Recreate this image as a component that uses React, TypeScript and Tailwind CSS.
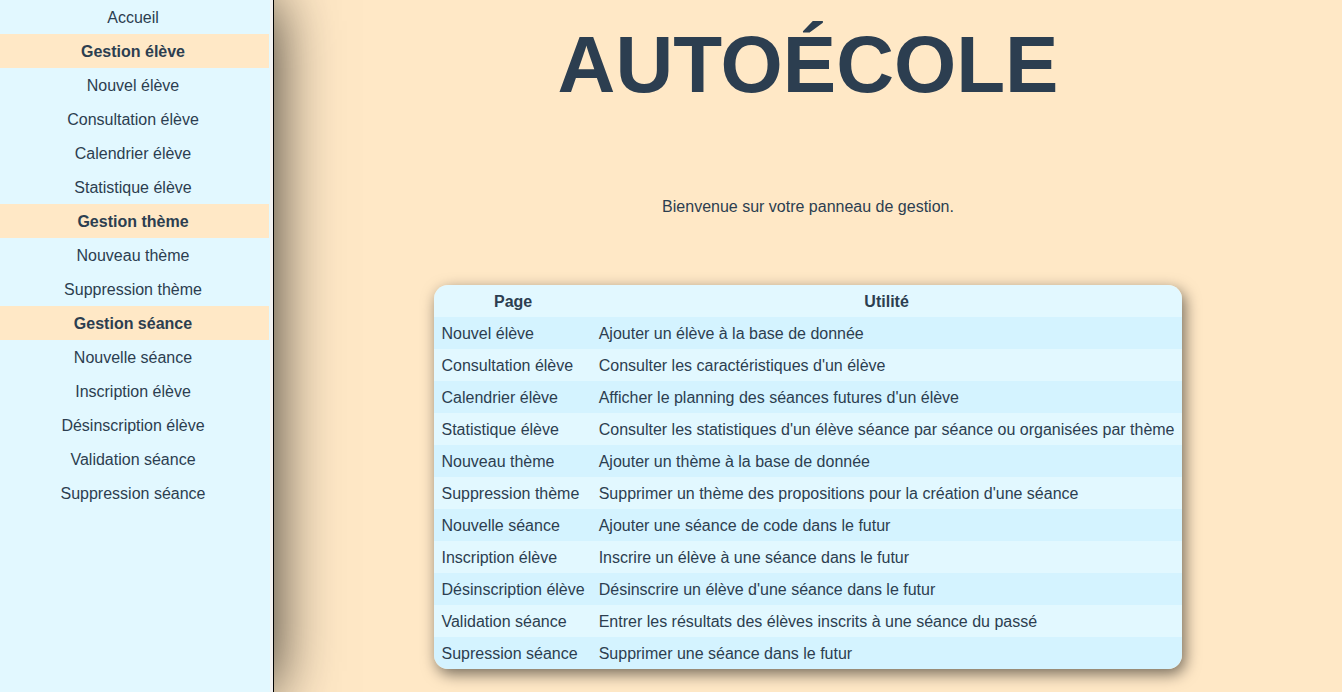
import React from "react";

const nav: { label: string; header?: boolean }[] = [
  { label: "Accueil" },
  { label: "Gestion élève", header: true },
  { label: "Nouvel élève" },
  { label: "Consultation élève" },
  { label: "Calendrier élève" },
  { label: "Statistique élève" },
  { label: "Gestion thème", header: true },
  { label: "Nouveau thème" },
  { label: "Suppression thème" },
  { label: "Gestion séance", header: true },
  { label: "Nouvelle séance" },
  { label: "Inscription élève" },
  { label: "Désinscription élève" },
  { label: "Validation séance" },
  { label: "Suppression séance" },
];

const rows: [string, string][] = [
  ["Nouvel élève", "Ajouter un élève à la base de donnée"],
  ["Consultation élève", "Consulter les caractéristiques d'un élève"],
  ["Calendrier élève", "Afficher le planning des séances futures d'un élève"],
  ["Statistique élève", "Consulter les statistiques d'un élève séance par séance ou organisées par thème"],
  ["Nouveau thème", "Ajouter un thème à la base de donnée"],
  ["Suppression thème", "Supprimer un thème des propositions pour la création d'une séance"],
  ["Nouvelle séance", "Ajouter une séance de code dans le futur"],
  ["Inscription élève", "Inscrire un élève à une séance dans le futur"],
  ["Désinscription élève", "Désinscrire un élève d'une séance dans le futur"],
  ["Validation séance", "Entrer les résultats des élèves inscrits à une séance du passé"],
  ["Supression séance", "Supprimer une séance dans le futur"],
];

export default function App() {
  return (
    <div
      className="flex h-[692px] w-full overflow-hidden bg-[#ffe8c6] text-[16px] text-[#2c3e50]"
      style={{ fontFamily: '"Liberation Sans", Arial, sans-serif' }}
    >
      <aside className="relative z-10 flex h-full w-[274px] shrink-0 border-r border-black bg-[#f2f2f2] shadow-[0_0_60px_rgba(0,0,0,0.8)]">
        <nav className="flex h-full w-[270px] flex-col bg-[#e2f8ff]">
          {nav.map((n) => (
            <div
              key={n.label}
              className={
                n.header
                  ? "flex h-[34px] w-[269px] items-center justify-center pr-[3px] pt-[2px] bg-[#ffe8c6] font-bold"
                  : "flex h-[34px] w-[269px] items-center justify-center pr-[3px] pt-[2px]"
              }
            >
              {n.label}
            </div>
          ))}
        </nav>
      </aside>
      <main className="flex flex-1 flex-col items-center pt-[25px]">
        <h1 className="h-20 text-[80px] font-bold leading-none">AUTOÉCOLE</h1>
        <p className="mt-[93px] leading-[18px]">Bienvenue sur votre panneau de gestion.</p>
        <div className="mt-[69px] overflow-hidden rounded-[14px] shadow-[3px_5px_15px_rgba(0,0,0,0.55)]">
          <table className="border-collapse">
            <thead>
              <tr className="h-8 bg-[#e2f8ff]">
                <th className="px-[7px] pt-[2px] text-center font-bold">Page</th>
                <th className="px-[7px] pt-[2px] text-center font-bold">Utilité</th>
              </tr>
            </thead>
            <tbody>
              {rows.map(([a, b], i) => (
                <tr key={a} className={i % 2 === 0 ? "h-8 bg-[#d4f3ff]" : "h-8 bg-[#e2f8ff]"}>
                  <td className="whitespace-nowrap px-[7px] pt-[2px] text-left">{a}</td>
                  <td className="whitespace-nowrap px-[7px] pt-[2px] text-left">{b}</td>
                </tr>
              ))}
            </tbody>
          </table>
        </div>
      </main>
    </div>
  );
}
